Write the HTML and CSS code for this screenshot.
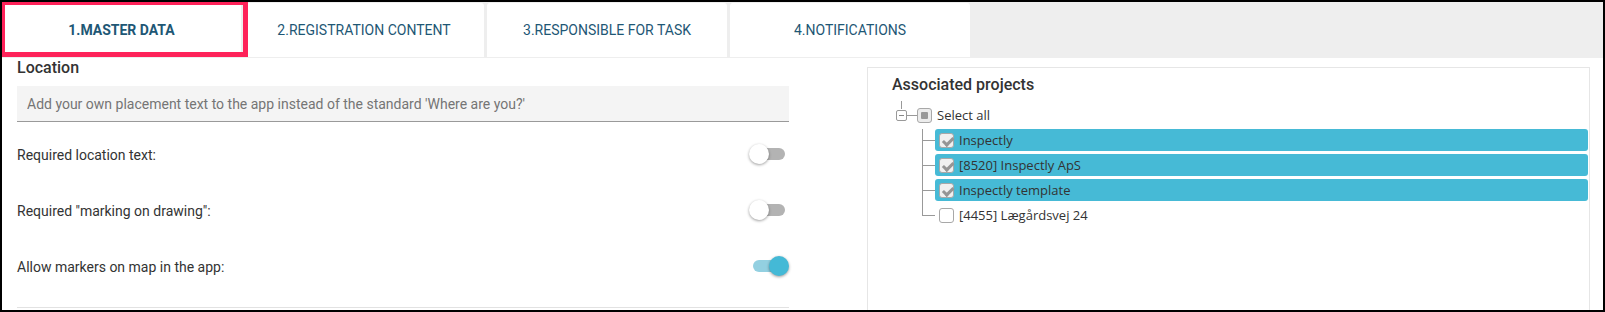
FILE: index.html
```html
<!DOCTYPE html>
<html lang="en">
<head>
  <meta charset="UTF-8" />
  <title>Task type settings</title>
  <link rel="stylesheet" href="styles.css">
</head>
<body>
  <div class="tabs">
    <div class="tab active">1.MASTER DATA</div>
    <div class="tab">2.REGISTRATION CONTENT</div>
    <div class="tab">3.RESPONSIBLE FOR TASK</div>
    <div class="tab">4.NOTIFICATIONS</div>
    <div class="highlight-box"></div>
  </div>

  <div class="content">
    <div class="left-col">
      <div class="section-title">Location</div>
      <input class="text-input" type="text" placeholder="Add your own placement text to the app instead of the standard 'Where are you?'">

      <div class="settings">
        <div class="setting-row">
          <span>Required location text:</span>
          <label class="switch"><input type="checkbox"><span class="track"></span></label>
        </div>
        <div class="setting-row">
          <span>Required "marking on drawing":</span>
          <label class="switch"><input type="checkbox"><span class="track"></span></label>
        </div>
        <div class="setting-row">
          <span>Allow markers on map in the app:</span>
          <label class="switch"><input type="checkbox" checked><span class="track"></span></label>
        </div>
      </div>
      <div class="divider"></div>
    </div>

    <div class="right-col">
      <div class="projects-box">
        <div class="box-title">Associated projects</div>
        <div class="tree">
          <div class="tree-root">
            <span class="expander"></span>
            <span class="connector"></span>
            <span class="check partial"></span>
            <span class="node-label">Select all</span>
          </div>
          <div class="tree-children">
            <div class="node selected"><span class="check checked"></span><span class="node-label">Inspectly</span></div>
            <div class="node selected"><span class="check checked"></span><span class="node-label">[8520] Inspectly ApS</span></div>
            <div class="node selected"><span class="check checked"></span><span class="node-label">Inspectly template</span></div>
            <div class="node"><span class="check"></span><span class="node-label">[4455] Lægårdsvej 24</span></div>
          </div>
        </div>
      </div>
    </div>
  </div>
</body>
</html>
```

FILE: styles.css
```css
html, body {
  margin: 0;
  padding: 0;
}

body {
  width: 1605px;
  height: 312px;
  box-sizing: border-box;
  border: 2px solid #000;
  background: #fff;
  font-family: Roboto, "Liberation Sans", sans-serif;
  color: #333;
  overflow: hidden;
}

/* tab bar */
.tabs {
  position: relative;
  display: flex;
  gap: 3px;
  height: 56px;
  box-sizing: border-box;
  padding-top: 1px;
  background: #eee;
}

.tab {
  flex: 0 0 240px;
  height: 54px;
  display: flex;
  align-items: center;
  justify-content: center;
  background: #fff;
  border-radius: 3px 3px 0 0;
  font-size: 14px;
  color: #1e5775;
}

.tab.active {
  font-weight: bold;
  flex-basis: 239px;
}

.highlight-box {
  position: absolute;
  left: -2px;
  top: -2px;
  width: 248px;
  height: 57px;
  box-sizing: border-box;
  border: 5px solid #fe2259;
}

/* main content */
.content {
  display: flex;
  gap: 78px;
  padding: 0 13px 0 15px;
}

.left-col {
  flex: 0 0 772px;
}

.section-title {
  font-size: 16px;
  font-weight: 500;
  line-height: 20px;
}

.text-input {
  display: block;
  width: 100%;
  height: 36px;
  box-sizing: border-box;
  margin-top: 8px;
  padding: 0 10px;
  border: none;
  border-bottom: 1px solid #9a9a9a;
  background: #f4f4f4;
  font-family: Roboto, "Liberation Sans", sans-serif;
  font-size: 14px;
  color: #333;
}

.text-input::placeholder {
  color: #757575;
}

.settings {
  margin-top: 5px;
}

.setting-row {
  display: flex;
  justify-content: space-between;
  align-items: center;
  height: 56px;
  font-size: 14px;
}

.switch {
  position: relative;
  display: inline-block;
  width: 40px;
  height: 20px;
  margin-top: -2px;
}

.switch input {
  opacity: 0;
  width: 0;
  height: 0;
}

.track {
  position: absolute;
  left: 4px;
  right: 4px;
  top: 4px;
  height: 12px;
  border-radius: 6px;
  background: #b3b3b3;
  cursor: pointer;
}

.track:before {
  position: absolute;
  content: "";
  width: 20px;
  height: 20px;
  left: -4px;
  top: -4px;
  border-radius: 50%;
  background: #fff;
  box-shadow: 0 1px 3px rgba(0, 0, 0, 0.4);
}

input:checked + .track {
  background: #93d0e1;
}

input:checked + .track:before {
  left: 16px;
  background: #44b9d6;
}

.divider {
  margin-top: 12px;
  border-top: 1px solid #e2e2e2;
}

/* associated projects */
.right-col {
  flex: 1;
  padding-top: 9px;
}

.projects-box {
  height: 260px;
  box-sizing: border-box;
  border: 1px solid #e6e6e6;
  padding: 7px 1px 0 0;
}

.box-title {
  padding-left: 24px;
  font-size: 16px;
  font-weight: 500;
  line-height: 20px;
}

.tree {
  padding-left: 28px;
  margin-top: 12px;
  font-family: "Open Sans", "Noto Sans", sans-serif;
  font-size: 13px;
  color: #333;
}

.tree-root {
  position: relative;
  display: flex;
  align-items: center;
  height: 16px;
}

.tree-root:before {
  content: "";
  position: absolute;
  left: 5px;
  top: -6px;
  width: 1px;
  height: 8px;
  background: #999;
}

.expander {
  position: relative;
  width: 11px;
  height: 11px;
  box-sizing: border-box;
  border: 1px solid #999;
  border-radius: 2px;
  background: #fff;
}

.expander:after {
  content: "";
  position: absolute;
  left: 2px;
  right: 2px;
  top: 4px;
  height: 1px;
  background: #888;
}

.connector {
  width: 10px;
  height: 1px;
  background: #999;
}

.check {
  flex: 0 0 auto;
  position: relative;
  width: 15px;
  height: 15px;
  box-sizing: border-box;
  border: 1px solid #a8a8a8;
  border-radius: 3px;
  background: #fff;
}

.check.partial {
  background: #ececec;
}

.check.partial:after {
  content: "";
  position: absolute;
  left: 3px;
  top: 3px;
  width: 7px;
  height: 7px;
  border-radius: 1px;
  background: #999;
}

.check.checked {
  background: #f0f0f0;
}

.check.checked:after {
  content: "";
  position: absolute;
  left: 2px;
  top: 1px;
  width: 8px;
  height: 4px;
  border-left: 3px solid #959595;
  border-bottom: 3px solid #959595;
  transform: rotate(-45deg) translate(-1px, 2px);
}

.node-label {
  margin-left: 5px;
  white-space: nowrap;
}

.tree-children {
  margin-top: 6px;
  margin-left: 26px;
  display: flex;
  flex-direction: column;
  gap: 3px;
}

.node {
  position: relative;
  display: flex;
  align-items: center;
  height: 22px;
  margin-left: 13px;
  padding-left: 4px;
  border-radius: 3px;
}

.node.selected {
  background: #46bad6;
}

.node:before {
  content: "";
  position: absolute;
  left: -13px;
  top: -3px;
  bottom: 0;
  width: 1px;
  background: #999;
}

.node:first-child:before {
  top: 0;
}

.node:last-child:before {
  bottom: 50%;
}

.node:after {
  content: "";
  position: absolute;
  left: -13px;
  top: 50%;
  width: 13px;
  height: 1px;
  background: #999;
}
```
